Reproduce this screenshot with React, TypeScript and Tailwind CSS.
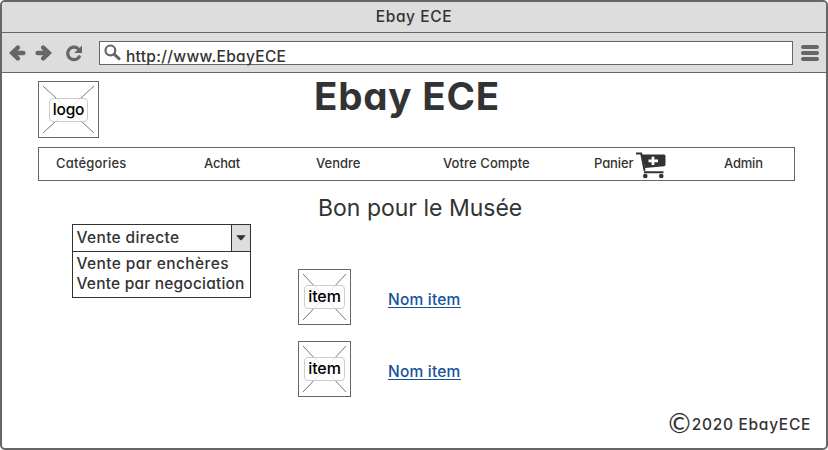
import React from 'react';

function Placeholder({ label, size, badge }: { label: string; size: string; badge: string }) {
  return (
    <div className={`relative flex shrink-0 items-center justify-center border border-[#666] bg-white ${size}`}>
      <svg className="absolute inset-[4px] h-[calc(100%-8px)] w-[calc(100%-8px)]" viewBox="0 0 100 100" preserveAspectRatio="none" stroke="#777" fill="none">
        <path d="M0 0L100 100M100 0L0 100" vectorEffect="non-scaling-stroke" />
      </svg>
      <span className={`relative flex h-6 items-center justify-center rounded-[4px] border border-[#ccc] bg-white/80 leading-none font-medium text-black ${badge}`}>
        <span className="-mt-0.5">{label}</span>
      </span>
    </div>
  );
}

function Arrow({ flip = false }: { flip?: boolean }) {
  return (
    <svg width="17" height="16" viewBox="0 0 17 16" className={flip ? 'rotate-180' : ''} fill="none" stroke="#666" strokeWidth="4.4" strokeLinecap="round">
      <path d="M8.8 2.6L3.2 8L8.8 13.4" strokeLinejoin="miter" />
      <path d="M4 8H14.4" />
    </svg>
  );
}

function Item() {
  return (
    <div className="flex h-14 items-center">
      <Placeholder label="item" size="h-[56px] w-[53px]" badge="w-[41px] text-base tracking-[-0.1px]" />
      <a className="ml-[37px] mt-[4px] h-[18px] w-[73px] border-b border-[#17539b] text-[15.5px] leading-[19px] font-medium tracking-[0.2px] whitespace-nowrap text-[#17539b]">Nom item</a>
    </div>
  );
}

export default function App() {
  return (
    <div className="flex h-[450px] w-[828px] flex-col overflow-hidden rounded-[5px] border-2 border-[#666] bg-white font-['Inter',sans-serif] text-[#333] [font-feature-settings:'cv11']">
      <header className="flex h-[31px] shrink-0 items-center justify-center border-b border-[#666] bg-[#ddd] text-[15.5px] font-medium tracking-[0.6px]">
        <span>Ebay ECE</span>
      </header>
      <div className="flex h-10 shrink-0 items-center border-b border-[#666] bg-[#ddd] pl-[7px]">
        <Arrow />
        <span className="ml-[9px] flex"><Arrow flip /></span>
        <svg className="ml-[13px]" width="18" height="18" viewBox="0 0 18 18" fill="none" stroke="#666" strokeWidth="3.2">
          <path d="M14.3 12.8A6.3 6.3 0 1 1 12.6 4.2" strokeLinecap="round" />
          <path d="M17 1.6V9H9.2Z" fill="#666" stroke="none" />
        </svg>
        <div className="ml-[16px] flex h-6 w-[694px] items-center border border-[#666] bg-white pl-1">
          <svg className="-mt-px" width="17" height="17" viewBox="0 0 17 17" fill="none" stroke="#666">
            <circle cx="6.4" cy="6.4" r="4.9" strokeWidth="2.2" />
            <path d="M10.3 10.3L15 14.7" strokeWidth="3" strokeLinecap="round" />
          </svg>
          <span className="ml-[5px] mt-[8px] text-[15.5px] leading-5 font-medium tracking-[0.3px]">http://www.EbayECE</span>
        </div>
        <div className="ml-2 flex w-[18px] flex-col gap-0.5">
          <i className="h-1 rounded-full bg-[#666]" />
          <i className="h-1 rounded-full bg-[#666]" />
          <i className="h-1 rounded-full bg-[#666]" />
        </div>
      </div>
      <main className="flex flex-1 flex-col pl-9">
        <div className="flex h-[74px] shrink-0 pt-2">
          <Placeholder label="logo" size="h-[57px] w-[61px]" badge="w-[39px] text-[15.5px] tracking-[-0.2px] pt-0.5" />
          <h1 className="ml-[215px] text-[38.5px] leading-[30px] font-bold tracking-[0.8px]">Ebay ECE</h1>
        </div>
        <nav className="flex h-[34px] w-[757px] shrink-0 items-center border border-[#666] pl-[17px] text-[13px] font-medium">
          <span className="w-[148px] tracking-[0.2px]">Catégories</span>
          <span className="w-[112px] tracking-[-0.2px]">Achat</span>
          <span className="w-[127px]">Vendre</span>
          <span className="w-[151px] tracking-[0.1px]">Votre Compte</span>
          <span className="w-[42px] tracking-[-0.1px]">Panier</span>
          <svg className="mt-[3px] w-[88px] shrink-0" width="88" height="27" viewBox="0 0 88 27" fill="none" stroke="#333">
            <path d="M0 1.6H5.2L8.6 18.8M8 20.3H27.5" strokeWidth="2" />
            <path d="M5.5 2.5H28Q29.5 2.5 29.5 4V12.5Q29.5 14 28 14.2L9 16Z" fill="#333" stroke="none" />
            <path d="M17 4.8V13M12.5 8.9H22" stroke="white" strokeWidth="2.8" />
            <circle cx="9.3" cy="24" r="2.3" fill="#333" stroke="none" />
            <circle cx="25.3" cy="24" r="2.3" fill="#333" stroke="none" />
          </svg>
          <span className="tracking-[-0.2px]">Admin</span>
        </nav>
        <h2 className="ml-[280px] mt-[13px] h-7 text-[23px] leading-7">Bon pour le Musée</h2>
        <div className="flex">
          <div className="ml-[34px] mt-[2px] h-[74px] w-[179px] border border-[#333] text-[15.5px] font-medium tracking-[0.2px] whitespace-nowrap">
            <div className="flex h-[27px] border-b border-[#333]">
              <span className="flex-1 pl-[3.5px] leading-[26px] tracking-[0.35px]">Vente directe</span>
              <span className="flex w-[19px] items-center justify-center border-l border-[#333] bg-[#ddd]">
                <svg width="10" height="6" viewBox="0 0 10 6"><path d="M.8 .5H9.2L5.8 4.7Q5 5.5 4.2 4.7Z" fill="#333" stroke="#333" strokeWidth=".6" /></svg>
              </span>
            </div>
            <div className="pl-[3.5px] pt-0.5 leading-5">
              <p className="tracking-[0.4px]">Vente par enchères</p>
              <p>Vente par negociation</p>
            </div>
          </div>
          <div className="ml-[47px] mt-[47px] flex flex-col gap-4">
            <Item />
            <Item />
          </div>
        </div>
        <footer className="mt-[12px] flex h-7 items-center justify-end pr-[15px] text-[15.5px] font-medium tracking-[0.7px]">
          <span className="mr-px -mt-0.5 font-['Lato',sans-serif] text-[27px] leading-none font-normal tracking-normal">©</span>
          <span className="mt-[3px]">2020 EbayECE</span>
        </footer>
      </main>
    </div>
  );
}
